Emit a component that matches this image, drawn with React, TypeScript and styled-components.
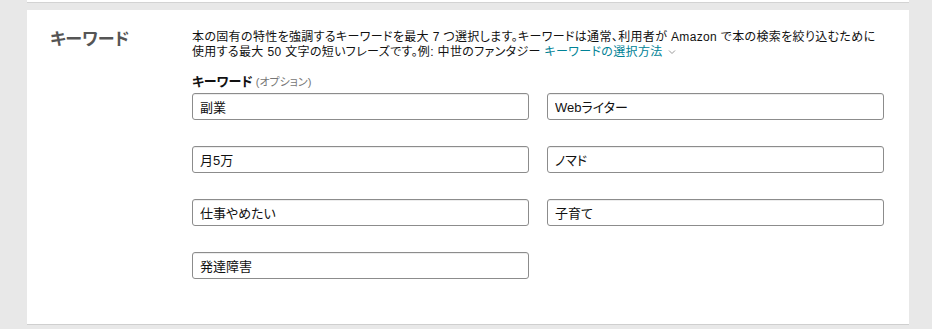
import React from "react";
import styled, { createGlobalStyle } from "styled-components";

const Global = createGlobalStyle`
  html, body { margin: 0; padding: 0; background: #e8e8e8; }
  body { font-family: "Liberation Sans", "Noto Sans CJK JP", sans-serif; color: #111; }
  * { box-sizing: border-box; }
`;

const Page = styled.div`
  width: 932px;
  height: 329px;
  overflow: hidden;
  padding: 0 23px 0 27px;
  display: flex;
  flex-direction: column;
  gap: 7px;
`;

const PrevCard = styled.div`
  height: 3px;
  background: #fff;
  border-bottom: 1px solid #d3d3d3;
`;

const Card = styled.section`
  background: #fff;
  box-shadow: 0 1px 0 #cfcfcf;
  padding: 20px 24px 45px 23px;
  display: grid;
  grid-template-columns: 142px 1fr;
`;

const Title = styled.h2`
  margin: 0;
  font-size: 17px;
  line-height: 20px;
  font-weight: 700;
  color: #555;
  font-feature-settings: "palt";
`;

const Body = styled.div`
  display: flex;
  flex-direction: column;
`;

const Description = styled.p`
  margin: 0;
  max-width: 690px;
  font-size: 12px;
  line-height: 15px;
  letter-spacing: 0.35px;
  color: #111;
  font-feature-settings: "palt";
`;

const Link = styled.a`
  color: #008296;
  text-decoration: none;
`;

const Chevron = styled.svg`
  display: inline-block;
  margin-left: 5px;
  vertical-align: 1px;
`;

const Label = styled.div`
  margin-top: 14px;
  margin-bottom: 3px;
  font-size: 13px;
  line-height: 16px;
  font-weight: 700;
  color: #111;
  font-feature-settings: "palt";
`;

const Optional = styled.span`
  font-size: 11px;
  font-weight: 400;
  color: #767676;
  margin-left: 3px;
`;

const Grid = styled.div`
  display: grid;
  grid-template-columns: 337px 337px;
  column-gap: 18px;
  row-gap: 26px;
`;

const Input = styled.input`
  height: 27px;
  width: 100%;
  border: 1px solid #8c8c8c;
  border-radius: 3px;
  box-shadow: inset 0 1px 0 rgba(0, 0, 0, 0.07);
  padding: 0 7px;
  font-family: "Liberation Sans", "Noto Sans CJK JP", sans-serif;
  font-size: 13px;
  font-feature-settings: "palt";
  color: #111;
  background: #fff;
  outline: none;
`;

const keywords = ["副業", "Webライター", "月5万", "ノマド", "仕事やめたい", "子育て", "発達障害"];

const descText =
  "本の固有の特性を強調するキーワードを最大 7 つ選択します。キーワードは通常、利用者が Amazon で本の検索を絞り込むために" +
  "使用する最大 50 文字の短いフレーズです。例: 中世のファンタジー ";

export default function App() {
  return (
    <>
      <Global />
      <Page>
        <PrevCard />
        <Card>
          <Title>キーワード</Title>
          <Body>
            <Description>
              {descText}
              <Link href="#">キーワードの選択方法</Link>
              <Chevron width="8" height="6" viewBox="0 0 8 6">
                <path d="M1 1.5 L4 4.5 L7 1.5" fill="none" stroke="#999" strokeWidth="1" />
              </Chevron>
            </Description>
            <Label>
              キーワード<Optional>(オプション)</Optional>
            </Label>
            <Grid>
              {keywords.map((k, i) => (
                <Input key={i} defaultValue={k} />
              ))}
            </Grid>
          </Body>
        </Card>
      </Page>
    </>
  );
}
